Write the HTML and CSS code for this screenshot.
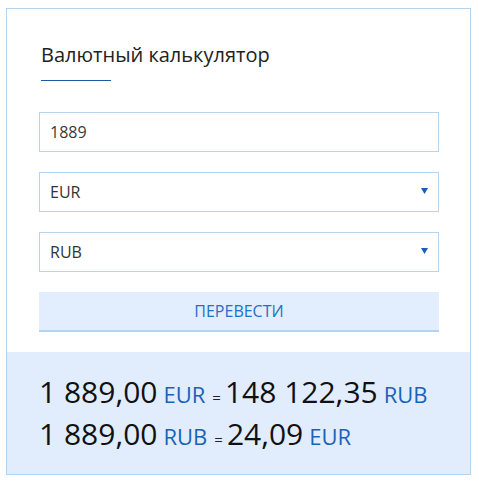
FILE: index.html
```html
<!DOCTYPE html>
<html lang="ru">
<head>
<meta charset="utf-8">
<title>Валютный калькулятор</title>
<link rel="stylesheet" href="styles.css">
</head>
<body>
<div class="card">
  <div class="form">
    <h2 class="title">Валютный калькулятор</h2>
    <div class="title-line"></div>
    <div class="field field-input">1889</div>
    <div class="field field-select">
      <span>EUR</span>
      <svg class="arrow" width="7" height="6" viewBox="0 0 7 6"><path d="M0 0H7L3.5 6Z" fill="#1a5fb4"/></svg>
    </div>
    <div class="field field-select">
      <span>RUB</span>
      <svg class="arrow" width="7" height="6" viewBox="0 0 7 6"><path d="M0 0H7L3.5 6Z" fill="#1a5fb4"/></svg>
    </div>
    <div class="button">ПЕРЕВЕСТИ</div>
  </div>
  <div class="results">
    <div class="row"><span class="num">1 889,00</span><span class="cur">EUR</span><span class="eq">=</span><span class="num">148 122,35</span><span class="cur">RUB</span></div>
    <div class="row"><span class="num">1 889,00</span><span class="cur">RUB</span><span class="eq">=</span><span class="num">24,09</span><span class="cur">EUR</span></div>
  </div>
</div>
</body>
</html>
```
FILE: styles.css
```css
html, body {
  margin: 0;
  padding: 0;
  background: #ffffff;
}
body {
  font-family: "Open Sans", "Noto Sans", sans-serif;
  color: #222222;
  padding: 8px 8px 8px 6px;
}
.card {
  border: 1px solid #b3d4ef;
  height: 465px;
  display: flex;
  flex-direction: column;
}
.form {
  padding: 32px 31px 20px 32px;
  display: flex;
  flex-direction: column;
}
.title {
  margin: 0 0 0 2px;
  font-size: 20px;
  line-height: 28px;
  font-weight: 400;
  color: #222222;
}
.title-line {
  width: 70px;
  height: 1px;
  background: #1d5aa3;
  margin: 11px 0 31px 2px;
}
.field {
  height: 38px;
  border: 1px solid #b6d4ee;
  display: flex;
  align-items: center;
  padding: 0 10px 0 10px;
  font-size: 16px;
  color: #333333;
  margin-bottom: 20px;
}
.field-input {
  color: #3a3a3a;
}
.field-select span {
  flex: 1;
}
.arrow {
  display: block;
  margin-top: -2px;
}
.button {
  height: 38px;
  background: #e2eefd;
  border-bottom: 2px solid #b4d3ef;
  display: flex;
  align-items: center;
  justify-content: center;
  font-size: 16px;
  color: #2470c6;
}
.results {
  flex: 1;
  background: #e1edfd;
  padding: 19px 32px;
}
.row {
  height: 42px;
  line-height: 42px;
  display: flex;
  align-items: baseline;
  white-space: nowrap;
  color: #111111;
}
.num {
  font-size: 30px;
}
.cur {
  font-size: 22px;
  color: #1a62b8;
  margin-left: 6px;
}
.eq {
  font-size: 15px;
  color: #222222;
  margin-left: 7px;
  margin-right: 4px;
}
```
